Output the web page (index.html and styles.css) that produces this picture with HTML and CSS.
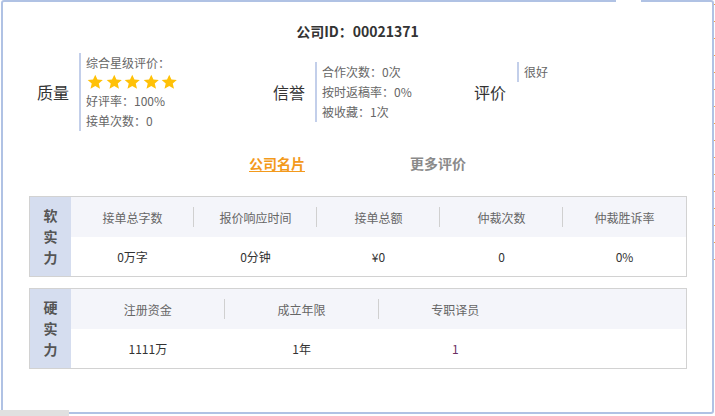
FILE: index.html
```html
<!DOCTYPE html>
<html lang="zh">
<head>
<meta charset="utf-8">
<link rel="stylesheet" href="styles.css">
</head>
<body>
<div class="page">
  <div class="popup">
    <div class="notch"></div>
    <h1 class="title">公司ID：00021371</h1>
    <div class="info">
      <div class="sec sec1">
        <span class="sec-label">质量</span>
        <div class="sec-detail">
          <div class="line">综合星级评价：</div>
          <div class="stars">
            <svg viewBox="0 0 24 24"><path d="M12 1l3.2 7.1 7.8.7-5.9 5.1 1.8 7.6L12 17.5l-6.9 4 1.8-7.6L1 8.8l7.8-.7z"/></svg>
            <svg viewBox="0 0 24 24"><path d="M12 1l3.2 7.1 7.8.7-5.9 5.1 1.8 7.6L12 17.5l-6.9 4 1.8-7.6L1 8.8l7.8-.7z"/></svg>
            <svg viewBox="0 0 24 24"><path d="M12 1l3.2 7.1 7.8.7-5.9 5.1 1.8 7.6L12 17.5l-6.9 4 1.8-7.6L1 8.8l7.8-.7z"/></svg>
            <svg viewBox="0 0 24 24"><path d="M12 1l3.2 7.1 7.8.7-5.9 5.1 1.8 7.6L12 17.5l-6.9 4 1.8-7.6L1 8.8l7.8-.7z"/></svg>
            <svg viewBox="0 0 24 24"><path d="M12 1l3.2 7.1 7.8.7-5.9 5.1 1.8 7.6L12 17.5l-6.9 4 1.8-7.6L1 8.8l7.8-.7z"/></svg>
          </div>
          <div class="line">好评率：100%</div>
          <div class="line">接单次数：0</div>
        </div>
      </div>
      <div class="sec sec2">
        <span class="sec-label">信誉</span>
        <div class="sec-detail">
          <div class="line">合作次数：0次</div>
          <div class="line">按时返稿率：0%</div>
          <div class="line">被收藏：1次</div>
        </div>
      </div>
      <div class="sec sec3">
        <span class="sec-label">评价</span>
        <div class="sec-detail top">
          <div class="line">很好</div>
        </div>
      </div>
    </div>
    <div class="tabs">
      <span class="tab active">公司名片</span>
      <span class="tab">更多评价</span>
    </div>
    <div class="tables">
      <div class="box">
        <div class="box-label">软<br>实<br>力</div>
        <div class="grid">
          <div class="hd">接单总字数</div>
          <div class="hd">报价响应时间</div>
          <div class="hd">接单总额</div>
          <div class="hd">仲裁次数</div>
          <div class="hd last">仲裁胜诉率</div>
          <div class="val">0万字</div>
          <div class="val">0分钟</div>
          <div class="val">¥0</div>
          <div class="val">0</div>
          <div class="val">0%</div>
        </div>
      </div>
      <div class="box">
        <div class="box-label">硬<br>实<br>力</div>
        <div class="grid four">
          <div class="hd">注册资金</div>
          <div class="hd">成立年限</div>
          <div class="hd last">专职译员</div>
          <div class="hd last"></div>
          <div class="val">1111万</div>
          <div class="val">1年</div>
          <div class="val purple">1</div>
          <div class="val"></div>
        </div>
      </div>
    </div>
  </div>
  <div class="corner-block"></div>
  <div class="edge-ticks"></div>
</div>
</body>
</html>
```

FILE: styles.css
```css
* { box-sizing: border-box; }
html, body { margin: 0; padding: 0; }
body {
  width: 715px;
  height: 416px;
  overflow: hidden;
  background: #ffffff;
  font-family: "Noto Sans CJK SC", "Liberation Sans", sans-serif;
  color: #333;
}
.page {
  position: relative;
  width: 715px;
  height: 416px;
}
.popup {
  position: relative;
  margin-left: 1px;
  width: 713px;
  height: 414px;
  border: 2px solid #b0c2e4;
  border-radius: 3px;
  background: #fff;
}
.notch {
  position: absolute;
  top: -2px;
  left: 613px;
  width: 25px;
  height: 2px;
  background: #fff;
}
.title {
  margin: 19px 0 0;
  text-align: center;
  font-size: 14px;
  line-height: 20px;
  font-weight: bold;
  color: #333;
}
.info {
  display: grid;
  grid-template-columns: 236px 201px 1fr;
  margin-top: 12px;
  padding-left: 34px;
  height: 78px;
}
.sec {
  display: flex;
  align-items: center;
}
.sec-label {
  font-size: 16px;
  line-height: 20px;
  color: #333;
  width: 32px;
  margin-right: 10px;
  white-space: nowrap;
}
.sec3 .sec-label { margin-right: 11px; }
.sec-detail {
  border-left: 2px solid #c3cfea;
  padding-left: 5px;
  font-size: 12px;
  color: #666;
}
.sec-detail.top {
  align-self: flex-start;
  margin-top: 9px;
}
.line {
  line-height: 20px;
  white-space: nowrap;
}
.stars {
  display: flex;
  gap: 2px;
  height: 18px;
  align-items: center;
  padding-left: 1px;
}
.stars svg {
  width: 16.5px;
  height: 16.5px;
  fill: #ffc107;
}
.tabs {
  display: flex;
  justify-content: center;
  gap: 105px;
  margin-top: 22px;
  font-size: 14px;
  line-height: 20px;
  font-weight: bold;
}
.tab { color: #8a8a8a; }
.tab.active {
  color: #f39a1c;
  text-decoration: underline;
  text-underline-offset: 2px;
}
.tables {
  margin-top: 23px;
  padding: 0 25px 0 26px;
  display: flex;
  flex-direction: column;
  gap: 11px;
}
.box {
  display: flex;
  border: 1px solid #d2d2d2;
  height: 81px;
}
.box-label {
  width: 41px;
  flex: none;
  background: #d5ddef;
  color: #555;
  font-size: 14px;
  font-weight: bold;
  line-height: 21px;
  text-align: center;
  display: flex;
  align-items: center;
  justify-content: center;
}
.grid {
  flex: 1;
  display: grid;
  grid-template-columns: repeat(5, 1fr);
  grid-template-rows: 40px 39px;
}
.grid.four { grid-template-columns: repeat(4, 1fr); }
.hd {
  background: #f4f5fa;
  display: flex;
  align-items: center;
  justify-content: center;
  font-size: 12px;
  color: #666;
  position: relative;
}
.hd::after {
  content: "";
  position: absolute;
  right: 0;
  top: 10px;
  height: 20px;
  border-right: 1px solid #d0d0d0;
}
.hd.last::after { display: none; }
.val {
  display: flex;
  align-items: center;
  justify-content: center;
  font-size: 12px;
  color: #333;
}
.val.purple { color: #6b2f63; }
.corner-block {
  position: absolute;
  left: 0;
  top: 410px;
  width: 69px;
  height: 6px;
  background: #e0e0e0;
}
.edge-ticks {
  position: absolute;
  left: 714px;
  top: 4px;
  width: 1px;
  height: 260px;
  background: repeating-linear-gradient(to bottom, #f0a040 0 1px, transparent 1px 17px);
}
```
